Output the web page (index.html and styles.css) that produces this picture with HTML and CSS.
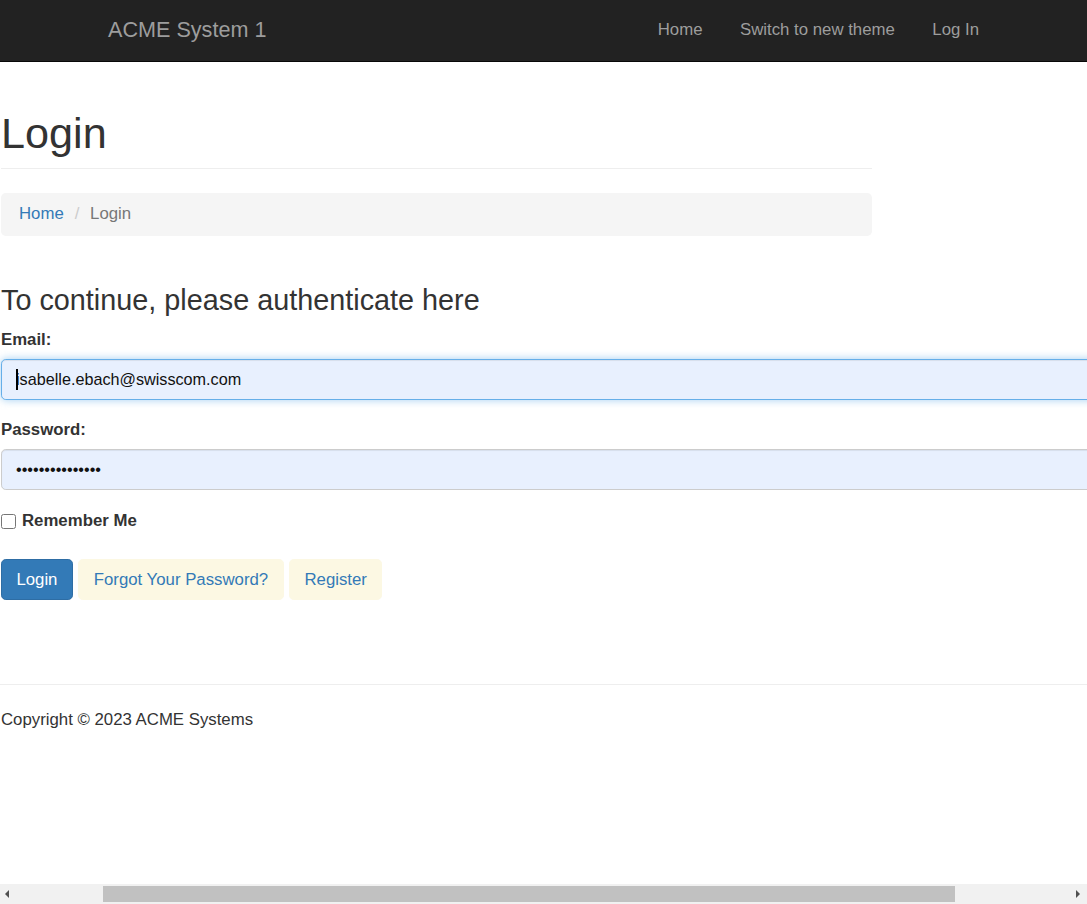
FILE: index.html
```html
<!DOCTYPE html>
<html lang="en">
<head>
<meta charset="utf-8">
<title>Login - ACME System 1</title>
<link rel="stylesheet" href="styles.css">
</head>
<body>
<nav class="navbar">
  <div class="nav-inner">
    <a class="brand" href="#">ACME System 1</a>
    <ul class="nav-links">
      <li><a href="#">Home</a></li>
      <li><a href="#">Switch to new theme</a></li>
      <li><a href="#">Log In</a></li>
    </ul>
  </div>
</nav>

<main class="content">
  <div class="page-header">
    <h1>Login</h1>
  </div>
  <ol class="breadcrumb">
    <li><a href="#">Home</a></li>
    <li class="active">Login</li>
  </ol>

  <form class="login-form">
    <h3>To continue, please authenticate here</h3>
    <div class="form-group">
      <label for="email">Email:</label>
      <div class="input-wrap">
        <input id="email" class="form-control focused" type="text" value="isabelle.ebach@swisscom.com">
        <span class="caret-bar"></span>
      </div>
    </div>
    <div class="form-group">
      <label for="password">Password:</label>
      <input id="password" class="form-control" type="password" value="abcdefghijklmno">
    </div>
    <div class="checkbox">
      <label><input type="checkbox"> Remember Me</label>
    </div>
    <div class="actions">
      <button type="button" class="btn btn-primary">Login</button>
      <a class="btn btn-soft" href="#">Forgot Your Password?</a>
      <a class="btn btn-soft" href="#">Register</a>
    </div>
  </form>

  <hr class="footer-rule">
  <footer class="footer">
    <p>Copyright © 2023 ACME Systems</p>
  </footer>
</main>

<div class="hscroll" aria-hidden="true">
  <span class="arrow">
    <svg width="17" height="20" viewBox="0 0 17 20"><polygon points="5,10 9,6 9,14" fill="#505050"/></svg>
  </span>
  <span class="track"><span class="thumb"></span></span>
  <span class="arrow">
    <svg width="17" height="20" viewBox="0 0 17 20"><polygon points="10,10 6,6 6,14" fill="#505050"/></svg>
  </span>
</div>
</body>
</html>
```

FILE: styles.css
```css
html, body {
  margin: 0;
  padding: 0;
  overflow: hidden;
}

body {
  font-family: "Liberation Sans", Arial, Helvetica, sans-serif;
  font-size: 16.8px;
  line-height: 24px;
  color: #333;
  background: #fff;
  height: 904px;
}

a {
  color: #337ab7;
  text-decoration: none;
}

/* Navbar */
.navbar {
  background: #222;
  border-bottom: 1px solid #080808;
  height: 61px;
}

.nav-inner {
  display: flex;
  align-items: flex-start;
  padding: 0 90px 0 108px;
}

.brand {
  color: #9d9d9d;
  font-size: 21.6px;
  line-height: 24px;
  padding: 18px 0;
}

.nav-links {
  list-style: none;
  margin: 0 0 0 auto;
  padding: 0;
  display: flex;
  gap: 1.5px;
}

.nav-links a {
  display: block;
  color: #9d9d9d;
  padding: 18px 18px;
  line-height: 24px;
}

/* Content */
.content {
  width: 1300px;
  padding-left: 1px;
}

.page-header {
  width: 871px;
  margin-top: 48px;
  padding-bottom: 10px;
  border-bottom: 1px solid #eee;
}

.page-header h1 {
  margin: 0;
  font-size: 43.2px;
  font-weight: 500;
  line-height: 47.5px;
  color: #333;
}

.breadcrumb {
  width: 871px;
  box-sizing: border-box;
  list-style: none;
  margin: 24px 0 24px;
  padding: 9.6px 18px;
  background: #f5f5f5;
  border-radius: 4.8px;
  display: flex;
  gap: 5px;
}

.breadcrumb li + li::before {
  content: "/\00a0";
  padding: 0 6px;
  color: #ccc;
}

.breadcrumb .active {
  color: #777;
}

/* Form */
.login-form {
  display: flow-root;
}

.login-form h3 {
  margin: 25px 0 12px;
  font-size: 28.8px;
  font-weight: 500;
  line-height: 31.7px;
  color: #333;
}

.form-group {
  margin-bottom: 18px;
}

.form-group label {
  display: inline-block;
  font-weight: bold;
  margin-bottom: 7px;
}

.input-wrap {
  position: relative;
}

.form-control {
  display: block;
  width: 100%;
  box-sizing: border-box;
  height: 41px;
  padding: 7px 14px;
  font-family: inherit;
  font-size: 16.2px;
  line-height: 24px;
  color: #111;
  background: #e8f0fe;
  border: 1px solid #ccc;
  border-radius: 4.8px;
  box-shadow: inset 0 1px 1px rgba(0, 0, 0, 0.075);
  outline: none;
  margin: 0;
}

.form-control.focused {
  border-color: #66afe9;
  box-shadow: inset 0 1px 1px rgba(0, 0, 0, 0.075), 0 0 8px rgba(102, 175, 233, 0.6);
}

.caret-bar {
  position: absolute;
  left: 15px;
  top: 10px;
  width: 2px;
  height: 21px;
  background: #000;
}

.checkbox {
  margin: 19px 0 26px;
}

.checkbox label {
  display: flex;
  align-items: center;
  font-weight: bold;
}

.checkbox input {
  width: 15px;
  height: 15px;
  margin: 0 6px 0 0;
}

.actions {
  display: flex;
  gap: 5.5px;
}

.btn {
  display: inline-block;
  box-sizing: border-box;
  height: 41px;
  padding: 7.5px 14.4px;
  font-family: inherit;
  font-size: 16.8px;
  line-height: 24px;
  border: 1px solid transparent;
  border-radius: 4.8px;
  cursor: pointer;
}

.btn-primary {
  color: #fff;
  background: #337ab7;
  border-color: #2e6da4;
}

.btn-soft {
  color: #337ab7;
  background: #fcf8e3;
  border-color: #fcf8e3;
}

/* Footer */
.footer-rule {
  margin: 84px 0 23px -1px;
  border: 0;
  border-top: 1px solid #eee;
  height: 0;
}

.footer p {
  margin: 0;
}

/* Fake horizontal scrollbar overlay */
.hscroll {
  position: fixed;
  left: 0;
  right: 0;
  bottom: 0;
  height: 20px;
  background: #f1f1f1;
  display: flex;
}

.arrow {
  width: 17px;
  height: 20px;
  display: block;
}

.arrow svg {
  display: block;
}

.track {
  flex: 1;
  display: flex;
  align-items: center;
}

.thumb {
  display: block;
  margin-left: 86px;
  width: 852px;
  height: 16px;
  background: #c1c1c1;
}
```
